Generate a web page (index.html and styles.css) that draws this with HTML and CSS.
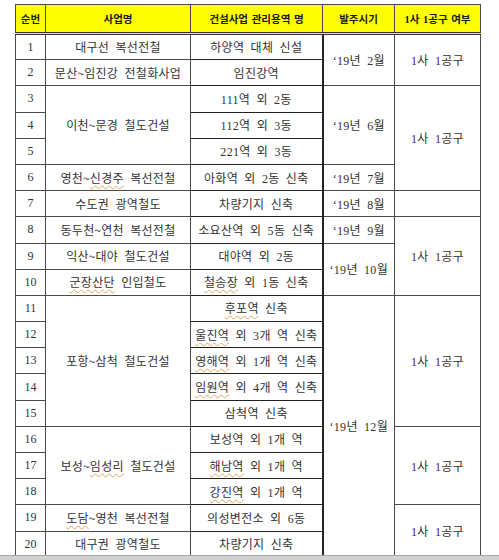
FILE: index.html
```html
<!DOCTYPE html>
<html lang="ko">
<head>
<meta charset="utf-8">
<link rel="stylesheet" href="styles.css">
</head>
<body>
<div class="page">
<table class="grid">
<colgroup>
<col class="c1"><col class="c2"><col class="c3"><col class="c4"><col class="c5">
</colgroup>
<thead>
<tr class="head">
<th>순번</th><th>사업명</th><th>건설사업 관리용역 명</th><th>발주시기</th><th>1사 1공구 여부</th>
</tr>
</thead>
<tbody>
<tr><td class="n">1</td><td>대구선 복선전철</td><td class="s">하양역 대체 신설</td><td rowspan="2">‘19년 2월</td><td rowspan="2">1사 1공구</td></tr>
<tr><td class="n">2</td><td>문산<span class="t">~</span>임진강 전철화사업</td><td class="s">임진강역</td></tr>
<tr><td class="n">3</td><td rowspan="3">이천<span class="t">~</span>문경 철도건설</td><td class="s">111역 외 2동</td><td rowspan="3">‘19년 6월</td><td rowspan="4">1사 1공구</td></tr>
<tr><td class="n">4</td><td class="s">112역 외 3동</td></tr>
<tr><td class="n">5</td><td class="s">221역 외 3동</td></tr>
<tr><td class="n">6</td><td>영천<span class="t">~</span><span class="sq">신경주</span> 복선전철</td><td class="s">아화역 외 2동 신축</td><td>‘19년 7월</td></tr>
<tr><td class="n">7</td><td>수도권 광역철도</td><td class="s">차량기지 신축</td><td>‘19년 8월</td><td></td></tr>
<tr><td class="n">8</td><td>동두천<span class="t">~</span>연천 복선전철</td><td class="s">소요산역 외 5동 신축</td><td>‘19년 9월</td><td rowspan="3">1사 1공구</td></tr>
<tr><td class="n">9</td><td>익산<span class="t">~</span>대야 철도건설</td><td class="s">대야역 외 2동</td><td rowspan="2">‘19년 10월</td></tr>
<tr><td class="n">10</td><td><span class="sq">군장산단</span> 인입철도</td><td class="s"><span class="sq">철송장</span> 외 1동 신축</td></tr>
<tr><td class="n">11</td><td rowspan="5">포항<span class="t">~</span>삼척 철도건설</td><td class="s"><span class="sq">후포역</span> 신축</td><td rowspan="10">‘19년 12월</td><td rowspan="5">1사 1공구</td></tr>
<tr><td class="n">12</td><td class="s"><span class="sq">울진역</span> 외 3개 역 신축</td></tr>
<tr><td class="n">13</td><td class="s"><span class="sq">영해역</span> 외 1개 역 신축</td></tr>
<tr><td class="n">14</td><td class="s"><span class="sq">임원역</span> 외 4개 역 신축</td></tr>
<tr><td class="n">15</td><td class="s">삼척역 신축</td></tr>
<tr><td class="n">16</td><td rowspan="3">보성<span class="t">~</span><span class="sq">임성리</span> 철도건설</td><td class="s">보성역 외 1개 역</td><td rowspan="3">1사 1공구</td></tr>
<tr><td class="n">17</td><td class="s"><span class="sq">해남역</span> 외 1개 역</td></tr>
<tr><td class="n">18</td><td class="s"><span class="sq">강진역</span> 외 1개 역</td></tr>
<tr><td class="n">19</td><td><span class="sq">도담</span><span class="t">~</span>영천 복선전철</td><td class="s">의성변전소 외 6동</td><td rowspan="2">1사 1공구</td></tr>
<tr><td class="n">20</td><td>대구권 광역철도</td><td class="s">차량기지 신축</td></tr>
</tbody>
</table>
</div>
<div class="bar"></div>
</body>
</html>
```
FILE: styles.css
```css
html, body {
  margin: 0;
  padding: 0;
  background: #ffffff;
}
.page {
  padding: 4px 0 0 15px;
  height: 554px;
  box-sizing: border-box;
}
.grid {
  border-collapse: collapse;
  table-layout: fixed;
  width: 465px;
  font-family: "Liberation Serif", "Noto Sans CJK KR", serif;
  font-size: 12px;
  color: #333333;
  border: 1px solid #222;
}
.c1 { width: 30px; }
.c2 { width: 145px; }
.c3 { width: 132px; }
.c4 { width: 72px; }
.c5 { width: 86px; }
.grid th, .grid td {
  border: 1px solid #4a4a4a;
  padding: 0;
  text-align: center;
  vertical-align: middle;
  white-space: nowrap;
  overflow: visible;
  word-spacing: 3px;
  letter-spacing: 0.3px;
}
.head {
  height: 29px;
}
.grid th {
  background: #ffff00;
  font-size: 10.5px;
  font-weight: bold;
  color: #1a1a1a;
  border-bottom: 3px double #333;
  letter-spacing: 0;
  word-spacing: 1px;
}
.grid tbody tr {
  height: 26.2px;
}
.grid td.n {
  font-size: 12px;
  letter-spacing: 0;
}
.grid td.s {
  border-color: #222;
  border-right-width: 2px;
}
.t {
  font-family: "Noto Sans CJK KR", sans-serif;
  letter-spacing: 0;
}
.sq {
  text-decoration: underline wavy #e2a25a;
  text-decoration-thickness: 1px;
  text-underline-offset: 2px;
}
.bar {
  height: 4px;
  margin-top: 1px;
  background: #d0d0d0;
  border-top: 1px solid #a8a8a8;
}
```
